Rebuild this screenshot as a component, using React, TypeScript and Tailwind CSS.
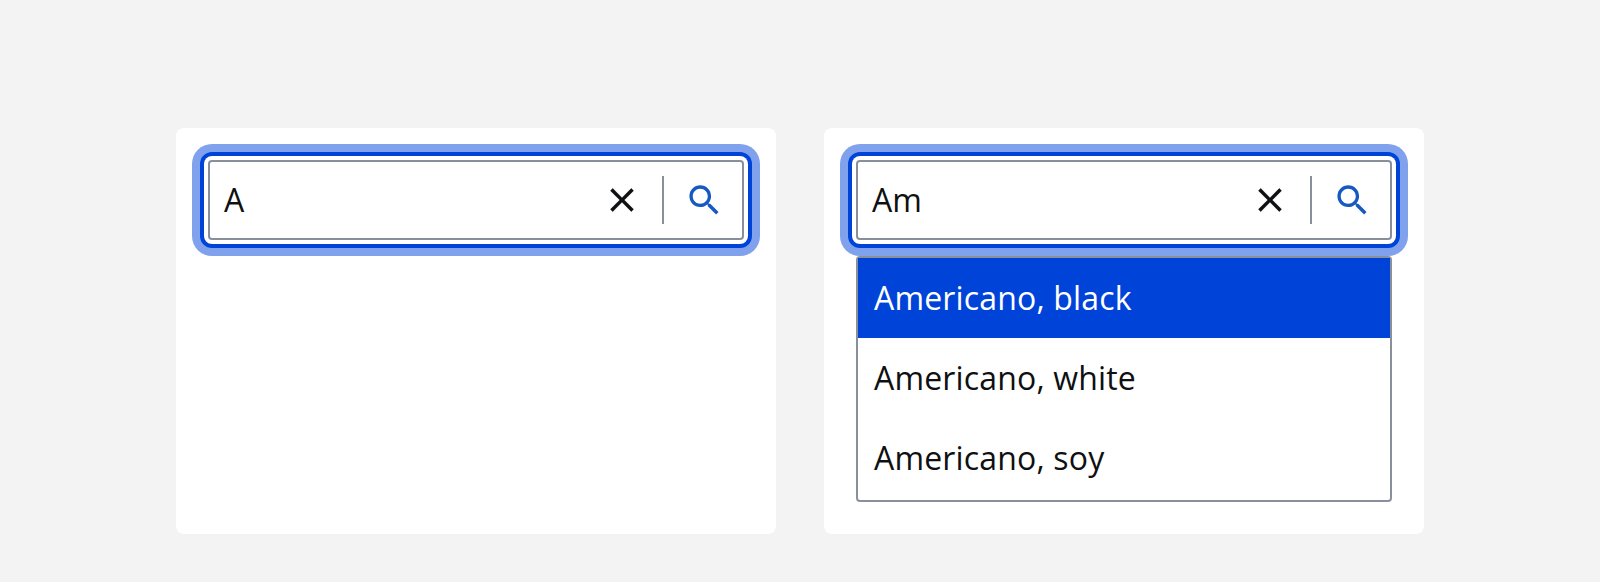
const options = ['Americano, black', 'Americano, white', 'Americano, soy'];

function SearchBox({ value }: { value: string }) {
  return (
    <div className="rounded-[20px] bg-[#80a1eb] p-2">
      <div className="rounded-[12px] bg-[#0043d9] p-1">
        <div className="rounded-[8px] bg-white p-1">
          <div className="flex h-20 items-center rounded-[4px] border-2 border-[#8a8f9c] bg-white pr-[18px] pl-[14px]">
            <span className="flex-1 text-[32px] leading-[48px]">{value}</span>
            <svg className="mr-5 size-10" viewBox="0 0 24 24" fill="#0e1011" stroke="#0e1011" strokeWidth="0.1">
              <path d="M19 6.41L17.59 5 12 10.59 6.41 5 5 6.41 10.59 12 5 17.59 6.41 19 12 13.41 17.59 19 19 17.59 13.41 12z" />
            </svg>
            <div className="mr-5 h-12 w-0.5 bg-[#8a8f9c]" />
            <svg className="size-10" viewBox="-0.25 -0.2 24 24" fill="#1759c2">
              <path d="M15.5 14h-.79l-.28-.27C15.41 12.59 16 11.11 16 9.5 16 5.91 13.09 3 9.5 3S3 5.91 3 9.5 5.91 16 9.5 16c1.61 0 3.09-.59 4.23-1.57l.27.28v.79l5 4.99L20.49 19l-4.99-5zm-6 0C7.01 14 5 11.99 5 9.5S7.01 5 9.5 5 14 7.01 14 9.5 11.99 14 9.5 14z" />
            </svg>
          </div>
        </div>
      </div>
    </div>
  );
}

export default function App() {
  return (
    <div className="flex h-[582px] w-[1600px] justify-center gap-12 bg-[#f3f3f3] pt-32 font-['Open_Sans',sans-serif] text-[#0e1011]">
      <div className="h-[406px] w-[600px] rounded-[8px] bg-white p-4">
        <SearchBox value="A" />
      </div>
      <div className="h-[406px] w-[600px] rounded-[8px] bg-white p-4">
        <SearchBox value="Am" />
        <ul className="mx-4 rounded-[4px] border-2 border-[#8a8f9c] bg-white pb-0.5 text-[32px] leading-[48px] tracking-[0.16px]">
          {options.map((option, i) => (
            <li
              key={option}
              className={
                i === 0
                  ? 'flex h-20 items-center bg-[#0043d9] px-4 text-white'
                  : 'flex h-20 items-center px-4'
              }
            >
              {option}
            </li>
          ))}
        </ul>
      </div>
    </div>
  );
}
